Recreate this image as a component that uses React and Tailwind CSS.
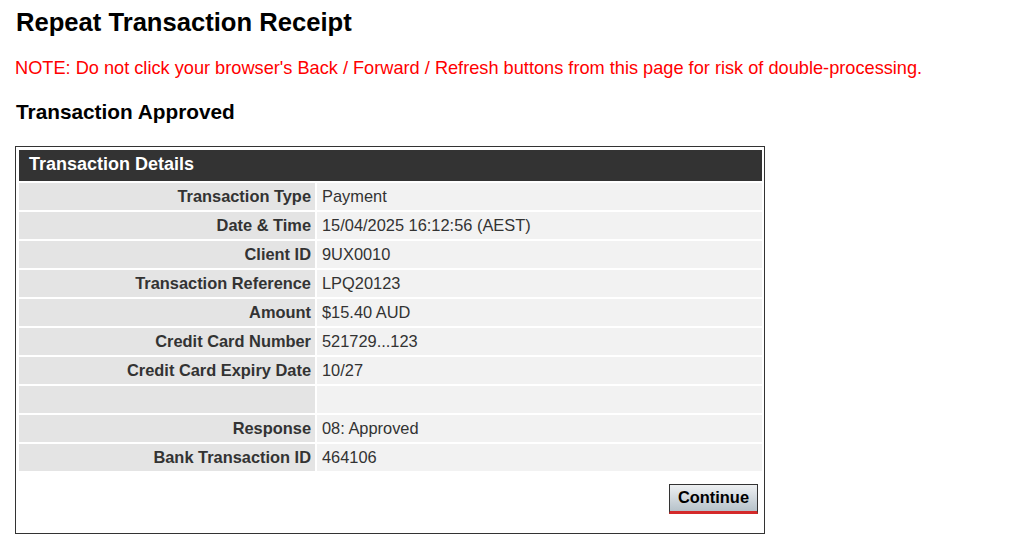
import React from 'react';

const rows = [
  ['Transaction Type', 'Payment'],
  ['Date & Time', '15/04/2025 16:12:56 (AEST)'],
  ['Client ID', '9UX0010'],
  ['Transaction Reference', 'LPQ20123'],
  ['Amount', '$15.40 AUD'],
  ['Credit Card Number', '521729...123'],
  ['Credit Card Expiry Date', '10/27'],
  ['', ''],
  ['Response', '08: Approved'],
  ['Bank Transaction ID', '464106'],
];

export default function App() {
  return (
    <div className="min-h-screen bg-white px-[15px] font-['Liberation_Sans',Arial,sans-serif] text-[#333]">
      <h1 className="pt-[7px] pl-px text-[25.6px] font-bold leading-[30px] text-black">Repeat Transaction Receipt</h1>

      <p className="mt-[21px] text-[18.2px] leading-[20px] text-[#ff0000]">
        NOTE: Do not click your browser's Back / Forward / Refresh buttons from this page for risk of double-processing.
      </p>

      <h2 className="mt-[22px] pl-px text-[20.8px] font-bold leading-[24px] text-black">Transaction Approved</h2>

      {/* receipt box */}
      <div className="mt-[22px] w-[750px] border border-[#333] pt-[3px] pl-[3px] pr-[2px] pb-[19px]">
        <table className="w-full border-separate border-spacing-0">
          <thead>
            <tr>
              <th colSpan={2} className="h-[31px] bg-[#333] pb-[2px] pl-[10px] text-left text-[18px] font-bold text-white">
                Transaction Details
              </th>
            </tr>
          </thead>
          <tbody>
            {rows.map(([label, value], i) => (
              <tr key={i}>
                <td className="h-[29px] w-[296px] border-t-2 border-white bg-[#e4e4e4] pr-[4px] text-right text-[16.4px] font-bold">
                  {label}
                </td>
                <td className="h-[29px] border-t-2 border-l-2 border-white bg-[#f2f2f2] pl-[5px] text-[16.4px]">
                  {value}
                </td>
              </tr>
            ))}
          </tbody>
        </table>

        <div className="mt-[13px] flex justify-end pr-[4px]">
          <button className="h-[30px] w-[89px] border-x border-t border-b-[3px] border-x-[#333] border-t-[#333] border-b-[#d42a2a] bg-gradient-to-b from-[#eef0f2] to-[#b6c2ca] pb-px text-[16.4px] font-bold text-black">
            Continue
          </button>
        </div>
      </div>
    </div>
  );
}
